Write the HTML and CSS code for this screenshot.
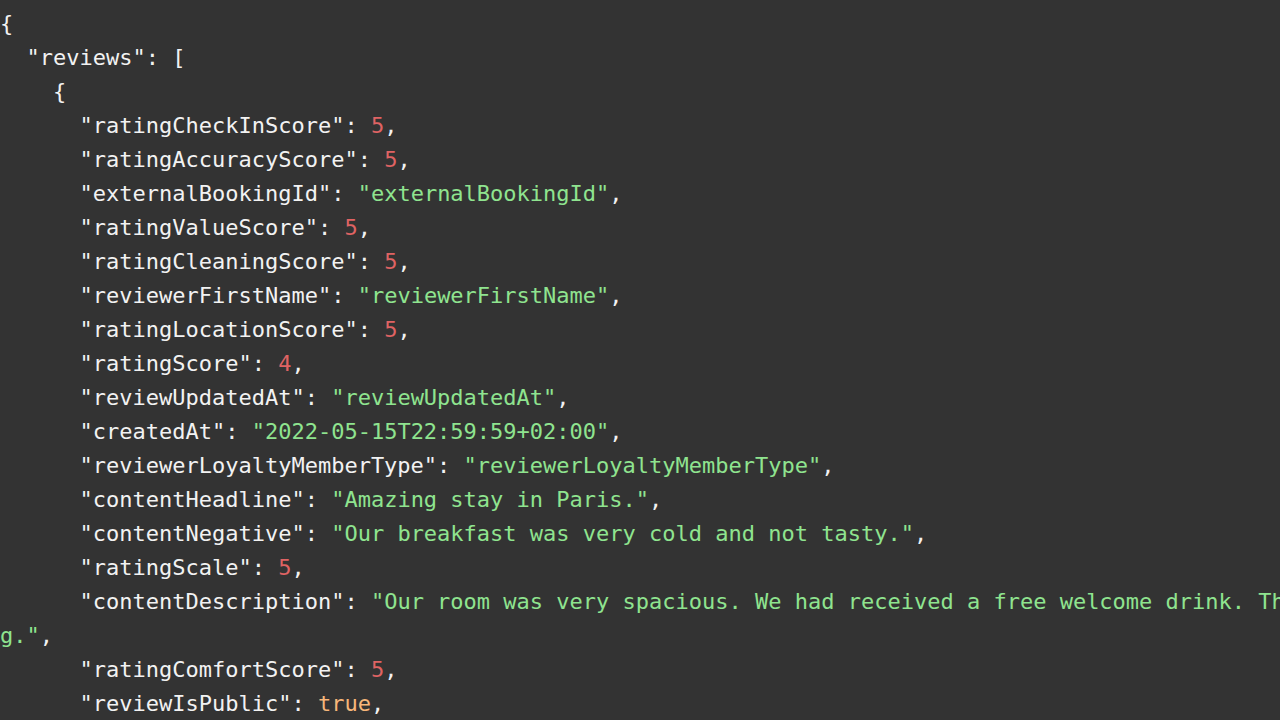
FILE: index.html
```html
<!DOCTYPE html>
<html>
<head>
<meta charset="utf-8">
<link rel="stylesheet" href="styles.css">
</head>
<body>
<pre class="code">{
  <span class="k">"reviews"</span>: [
    {
      <span class="k">"ratingCheckInScore"</span>: <span class="n">5</span>,
      <span class="k">"ratingAccuracyScore"</span>: <span class="n">5</span>,
      <span class="k">"externalBookingId"</span>: <span class="s">"externalBookingId"</span>,
      <span class="k">"ratingValueScore"</span>: <span class="n">5</span>,
      <span class="k">"ratingCleaningScore"</span>: <span class="n">5</span>,
      <span class="k">"reviewerFirstName"</span>: <span class="s">"reviewerFirstName"</span>,
      <span class="k">"ratingLocationScore"</span>: <span class="n">5</span>,
      <span class="k">"ratingScore"</span>: <span class="n">4</span>,
      <span class="k">"reviewUpdatedAt"</span>: <span class="s">"reviewUpdatedAt"</span>,
      <span class="k">"createdAt"</span>: <span class="s">"2022-05-15T22:59:59+02:00"</span>,
      <span class="k">"reviewerLoyaltyMemberType"</span>: <span class="s">"reviewerLoyaltyMemberType"</span>,
      <span class="k">"contentHeadline"</span>: <span class="s">"Amazing stay in Paris."</span>,
      <span class="k">"contentNegative"</span>: <span class="s">"Our breakfast was very cold and not tasty."</span>,
      <span class="k">"ratingScale"</span>: <span class="n">5</span>,
      <span class="k">"contentDescription"</span>: <span class="s">"Our room was very spacious. We had received a free welcome drink. The staff was amazing</span>
<span class="s">g."</span>,
      <span class="k">"ratingComfortScore"</span>: <span class="n">5</span>,
      <span class="k">"reviewIsPublic"</span>: <span class="b">true</span>,</pre>
</body>
</html>
```
FILE: styles.css
```css
html, body {
  margin: 0;
  padding: 0;
  background: #333333;
  height: 100%;
  overflow: hidden;
}
.code {
  margin: 0;
  padding: 7px 0 0 0;
  font-family: "DejaVu Sans Mono", "Liberation Mono", monospace;
  font-size: 22px;
  line-height: 34px;
  color: #f2f2f2;
  white-space: pre;
  overflow: hidden;
}
.k { color: #f2f2f2; }
.n { color: #df6363; }
.s { color: #8fe48f; }
.b { color: #f7b67a; }
```
